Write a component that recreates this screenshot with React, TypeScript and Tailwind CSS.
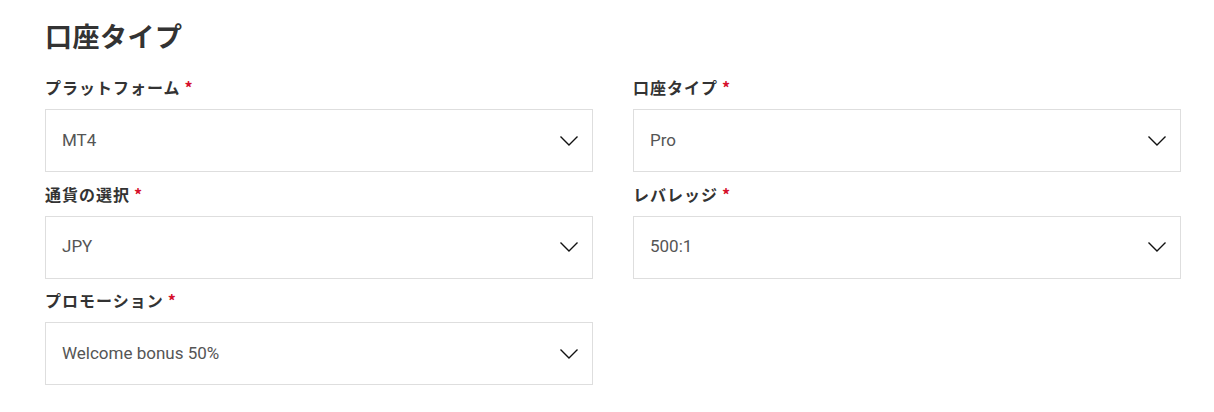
const fields = [
  { label: 'プラットフォーム', value: 'MT4' },
  { label: '口座タイプ', value: 'Pro' },
  { label: '通貨の選択', value: 'JPY' },
  { label: 'レバレッジ', value: '500:1' },
  { label: 'プロモーション', value: 'Welcome bonus 50%' },
];

function Chevron() {
  return (
    <svg width="20" height="12" viewBox="0 0 20 12" fill="none" className="shrink-0">
      <path d="M1.5 1.5 L10 10 L18.5 1.5" stroke="#111" strokeWidth="1.4" />
    </svg>
  );
}

function SelectField({ label, value }: { label: string; value: string }) {
  return (
    <div className="flex flex-col">
      <div className="mb-[11px] flex items-center text-[16px] leading-[21px] font-bold tracking-[1px] text-[#333]">
        <span>{label}</span>
        <span className="ml-[4px] text-[#d6102c]">*</span>
      </div>
      <div className="flex h-[63px] items-center justify-between border border-[#dedede] bg-white pl-4 pr-[13px]">
        <span className="font-['Roboto',sans-serif] text-[17px] text-[#555]">{value}</span>
        <Chevron />
      </div>
    </div>
  );
}

export default function App() {
  return (
    <div className="min-h-[412px] bg-white pl-[45px] pt-[20px] font-['Noto_Sans_CJK_JP','Noto_Sans',sans-serif]">
      <h2 className="mb-[25px] text-[27px] leading-[32px] font-bold tracking-[0.5px] text-[#333]">口座タイプ</h2>
      <div className="grid w-[1136px] grid-cols-2 gap-x-[40px] gap-y-[11.5px]">
        {fields.map((f) => (
          <SelectField key={f.label} label={f.label} value={f.value} />
        ))}
      </div>
    </div>
  );
}
